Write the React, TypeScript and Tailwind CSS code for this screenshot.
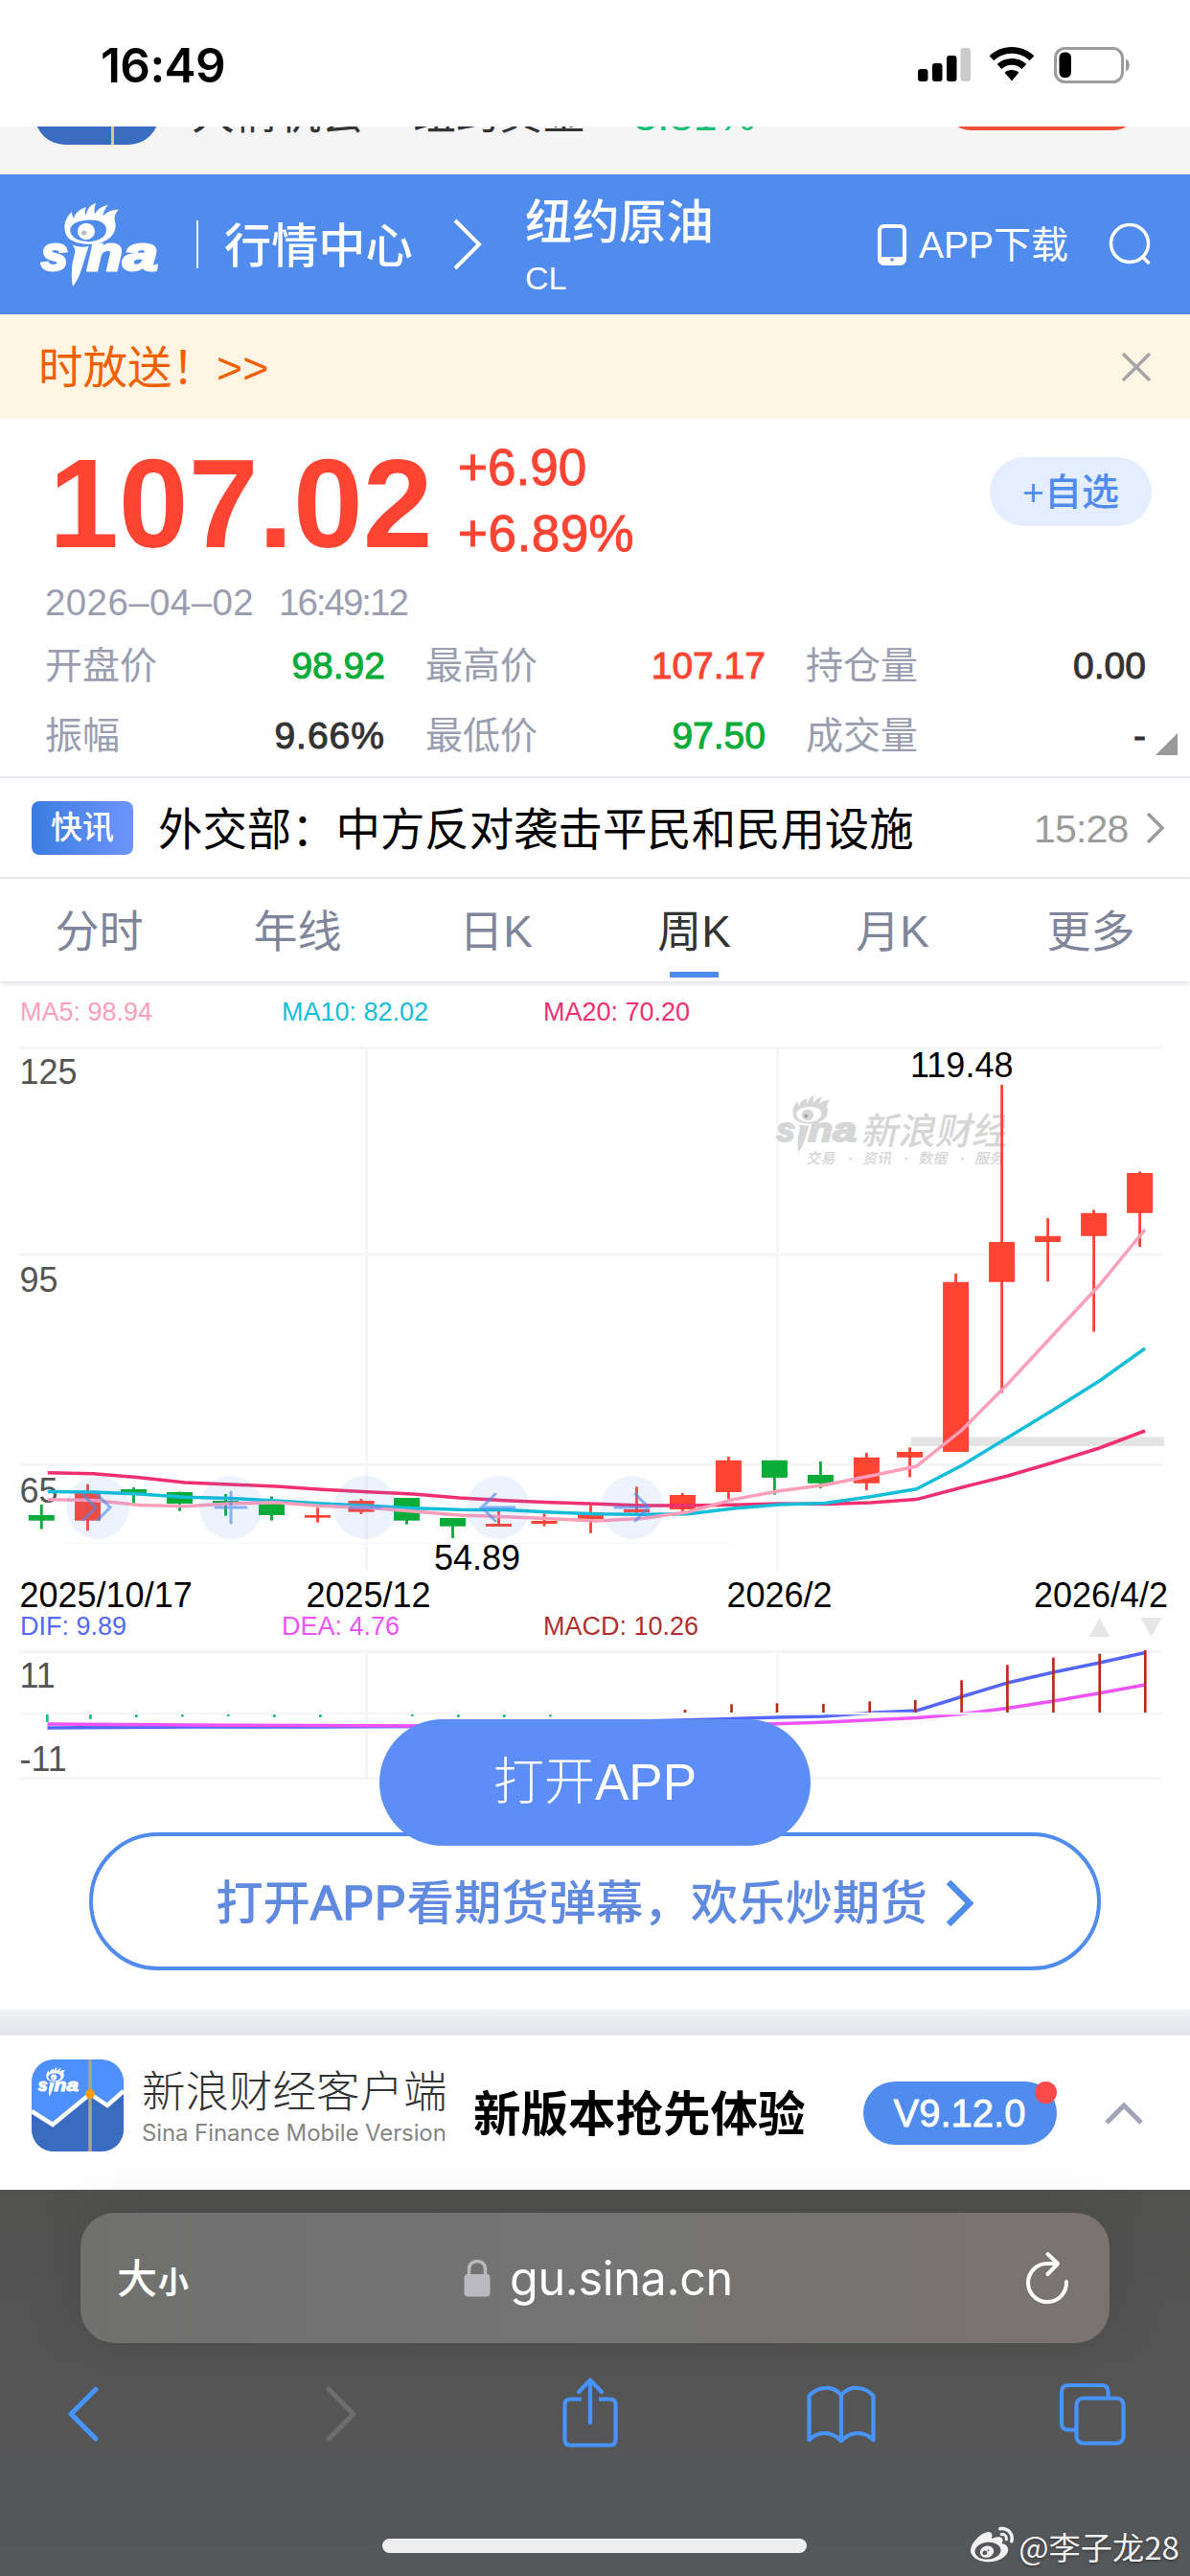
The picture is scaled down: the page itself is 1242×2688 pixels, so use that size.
import { FaWeibo } from "react-icons/fa";

type Candle = {
  x: number;
  top: number;
  bottom: number;
  high: number;
  low: number;
  up: boolean;
};

const RED = "#ff4433";
const GREEN = "#09ac39";

// [x, body top, body bottom, wick top, wick bottom, up]
const candles: Candle[] = (
  [
    [43.3, 1581, 1586.7, 1570, 1595.7, 0],
    [91.5, 1557.3, 1586.7, 1548.7, 1597.3, 1],
    [139.5, 1554, 1558, 1552, 1568.5, 0],
    [187.5, 1557, 1569, 1556.5, 1576.7, 0],
    [235.5, 1566, 1568.5, 1559, 1581.7, 0],
    [283.5, 1568, 1581, 1561.5, 1586.7, 0],
    [331.5, 1581, 1583.7, 1573.3, 1588.7, 1],
    [377, 1566, 1577.7, 1564, 1580, 1],
    [424.5, 1563, 1586.7, 1563, 1590.7, 0],
    [472.5, 1584, 1592.7, 1584, 1605, 0],
    [520.5, 1590, 1593, 1576.7, 1593, 1],
    [568, 1587, 1590, 1579.3, 1592.7, 1],
    [616.5, 1578, 1585, 1570.7, 1599.8, 1],
    [664.5, 1575, 1578, 1551.3, 1580, 1],
    [712.4, 1560, 1575, 1558, 1577.5, 1],
    [760.4, 1523.8, 1557, 1520, 1564, 1],
    [808.4, 1523.8, 1541.9, 1523.8, 1559.6, 0],
    [856.4, 1539, 1547.8, 1525, 1553, 0],
    [904.4, 1520.8, 1547.8, 1516, 1555, 1],
    [949.6, 1515, 1520.8, 1510.3, 1541.5, 1],
    [997.6, 1337.8, 1515, 1329, 1515, 1],
    [1045.6, 1296, 1337.8, 1132, 1453.5, 1],
    [1093.6, 1289.8, 1296, 1271.2, 1337.3, 1],
    [1141.6, 1265.8, 1289.8, 1262.4, 1389.6, 1],
    [1189.6, 1224, 1265.8, 1222.4, 1301, 1],
  ] as number[][]
).map(([x, top, bottom, high, low, up]) => ({
  x,
  top,
  bottom,
  high,
  low,
  up: up === 1,
}));

const ma5 = [
  1564.7, 1565.5, 1570.5, 1571.7, 1569, 1567.7, 1571.5, 1573.3, 1577, 1581,
  1582.7, 1584.7, 1587, 1584.5, 1577.7, 1564.6, 1555.8, 1549.5, 1540, 1530,
  1492, 1444, 1392.5, 1341, 1283,
];
const ma10 = [
  1556.5, 1557, 1559, 1562.3, 1563.5, 1566, 1569, 1571.3, 1573.7, 1575.3,
  1575.5, 1578, 1579.7, 1580.3, 1579.8, 1574, 1570, 1568.4, 1561.7, 1553.7,
  1529, 1500, 1471, 1441, 1407,
];
const ma20 = [
  1536.7, 1537.7, 1541.7, 1547, 1549, 1551, 1554.2, 1556.7, 1559, 1563,
  1565.7, 1567.7, 1569.3, 1571, 1571, 1570.3, 1569, 1569.6, 1568, 1564.6,
  1552, 1540, 1526, 1511, 1493,
];

function toPoints(values: number[]) {
  return values.map((y, i) => `${(49.8 + i * 47.72).toFixed(1)},${y}`).join(" ");
}

const macdBars: [number, number][] = [
  [715, 1784], [763.5, 1778.3], [811, 1777.3], [859.4, 1778], [907.7, 1775.3],
  [955.3, 1774], [1003.6, 1753.3], [1051.4, 1737.3], [1099.4, 1729.7],
  [1147.7, 1725.7], [1195.3, 1722],
];

const macdDots: [number, number][] = [
  [49.5, 8], [94.5, 5], [142.5, 3], [190.5, 2.5], [238.5, 2], [286.5, 3],
  [334.5, 3], [430.5, 2], [478.5, 3], [526.5, 3], [574.5, 2.5],
];

function SinaMark({ className }: { className?: string }) {
  return (
    <svg viewBox="38 30 370 266" className={className} fill="currentColor">
      <path
        fillRule="evenodd"
        d="M117 128C108 100 118 78 136 60C137 69 138 75 143 80C147 62 161 52 181 46C177 57 176 65 180 72C184 52 194 37 211 33C207 45 205 56 208 67C216 52 230 43 249 38C240 50 235 60 233 73C245 60 262 53 282 53C272 63 268 73 270 87C276 106 272 124 257 139C240 155 213 161 186 161C152 160 124 149 117 128ZM131 117C132 141 157 153 190 153C222 152 245 137 244 114C243 93 218 84 190 85C157 86 131 98 131 117Z"
      />
      <ellipse cx="181" cy="121" rx="27" ry="26" />
      <ellipse cx="174" cy="126" rx="9" ry="8" className="fill-black/25" />
      <g
        stroke="currentColor"
        strokeWidth="9"
        style={{ font: "italic bold 152px 'Liberation Sans'" }}
      >
        <text x="40" y="242" textLength="84" lengthAdjust="spacingAndGlyphs">s</text>
        <text x="184" y="242" textLength="110" lengthAdjust="spacingAndGlyphs">n</text>
        <text x="296" y="242" textLength="108" lengthAdjust="spacingAndGlyphs">a</text>
      </g>
      <path d="M138 163Q166 174 189 167L166 240Q156 272 139 293Q133 262 138 222L146 186Q148 175 138 163Z" />
    </svg>
  );
}

function StatusBar() {
  return (
    <div className="flex h-[132px] items-start justify-between bg-white pl-[105px] pr-[61px]">
      <span className="mt-[37px] font-['Inter'] text-[49.5px] font-semibold leading-[62px] tracking-[-0.6px] text-black">
        16:49
      </span>
      <div className="mt-[49px] flex items-start">
        <svg className="h-[37px] w-[56px]" viewBox="0 0 56 37">
          <rect x="1" y="23" width="10.5" height="13" rx="3" />
          <rect x="16" y="17" width="10.5" height="19" rx="3" />
          <rect x="31" y="9" width="10.5" height="27" rx="3" />
          <rect x="45.5" y="1" width="10.5" height="35" rx="3" fill="#cbcbcb" />
        </svg>
        <svg className="ml-[19px] h-[37px] w-[48px]" viewBox="0 0 48 37">
          <path d="M24 0C33.500 0 41.500 3.600 47.300 9.400L42.600 14.200C37.700 9.500 31.300 6.700 24 6.700S10.300 9.500 5.400 14.200L.7 9.400C6.500 3.600 14.500 0 24 0Z" />
          <path d="M24 12C30 12 35.300 14.300 39.300 18L34.500 22.900C31.700 20.300 28.100 18.700 24 18.700S16.300 20.300 13.500 22.900L8.700 18C12.700 14.300 18 12 24 12Z" />
          <path d="M24 24C27 24 29.600 25 31.400 26.700L24 35.500L16.600 26.700C18.400 25 21 24 24 24Z" />
        </svg>
        <svg className="ml-[19px] h-[38px] w-[82px]" viewBox="0 0 82 38">
          <rect x="2.500" y="1.500" width="70" height="35" rx="10" fill="none" stroke="#9c9c9c" strokeWidth="3" />
          <rect x="6.500" y="5.500" width="12.500" height="26.500" rx="5.500" />
          <path d="M76 12.500C81 14 81 24 76 25.500Z" fill="#9c9c9c" />
        </svg>
      </div>
    </div>
  );
}

function TopStrip() {
  return (
    <div className="flex h-[50px] items-end overflow-hidden bg-[#f5f5f5] pl-[36px] text-[45px] leading-[50px] text-[#333]">
      <div className="mb-[31px] flex h-[120px] w-[130px] shrink-0 rounded-[32px] bg-[#3a6cc0] pl-[80px]">
        <div className="h-full w-[3px] bg-[#dcc98a]" />
      </div>
      <span className="mb-[37px] ml-[34px] w-[231px] shrink-0">大情机会</span>
      <span className="mb-[37px] w-[230px] shrink-0">纽约黄金</span>
      <span className="mb-[36px] w-[328px] shrink-0 text-[45px] text-[#1bbf77]">3.81%</span>
      <div className="mb-[46px] h-[80px] w-[197px] shrink-0 rounded-[24px] bg-[#ef5138]" />
    </div>
  );
}

function Header() {
  return (
    <header className="flex h-[146px] items-center bg-[#4f8cee] pl-[42px] text-white">
      <SinaMark className="h-[89px] w-[124px]" />
      <div className="ml-[39px] h-[50px] w-[2px] bg-white/90" />
      <span className="ml-[27px] w-[200px] pt-[3px] text-[49.200px] font-medium leading-[60px]">行情中心</span>
      <svg className="ml-[38px] h-[54px] w-[32px]" viewBox="0 0 32 54" fill="none" stroke="white" strokeWidth="4">
        <path d="M3 2L28 27L3 52" />
      </svg>
      <div className="ml-[44px] flex w-[367px] flex-col pt-[2px]">
        <span className="text-[49.200px] font-medium leading-[58px]">纽约原油</span>
        <span className="mt-[10px] text-[34px] leading-[38px]">CL</span>
      </div>
      <svg className="h-[43px] w-[32px]" viewBox="0 0 32 43" fill="none" stroke="white">
        <rect x="3" y="2" width="26" height="39" rx="4.500" strokeWidth="4" />
        <path d="M3 37.500H29" strokeWidth="7" />
        <circle cx="16" cy="37" r="1.800" fill="#4f8cee" stroke="none" />
      </svg>
      <span className="ml-[12px] w-[160px] pt-[2px] text-[39px] leading-[50px]">APP下载</span>
      <svg className="ml-[38px] h-[46px] w-[46px]" viewBox="0 0 46 46" fill="none" stroke="white" strokeWidth="3.500">
        <circle cx="22" cy="22" r="19.500" />
        <path d="M35.500 36L42.500 43" />
      </svg>
    </header>
  );
}

function Notice() {
  return (
    <div className="flex h-[109px] items-center justify-between bg-[#fff5e2] pl-[40px] pr-[41px]">
      <p className="pt-[2px] text-[46.500px] leading-[60px] text-[#f06000]">时放送！&gt;&gt;</p>
      <svg className="h-[30px] w-[30px]" viewBox="0 0 30 30" stroke="#a5a5a5" strokeWidth="3.500">
        <path d="M1 1L29 29M29 1L1 29" />
      </svg>
    </div>
  );
}

type Stat = { label: string; value: string; color: string };

const stats: Stat[] = [
  { label: "开盘价", value: "98.92", color: "text-[#09ac39]" },
  { label: "最高价", value: "107.17", color: "text-[#ff4433]" },
  { label: "持仓量", value: "0.00", color: "text-[#333]" },
  { label: "振幅", value: "9.66%", color: "text-[#333] tracking-[1px]" },
  { label: "最低价", value: "97.50", color: "text-[#09ac39]" },
  { label: "成交量", value: "-", color: "text-[#333]" },
];

function Quote() {
  return (
    <section className="relative h-[373px] bg-white px-[47px]">
      <div className="flex pt-[16px] text-[#ff4433]">
        <span className="w-[431px] pl-[4px] pt-[8px] text-[131px] font-bold leading-[130px]">107.02</span>
        <div className="flex flex-col text-[53px] leading-[69px] [-webkit-text-stroke:1px_#ff4433]">
          <span>+6.90</span>
          <span className="tracking-[0.500px]">+6.89%</span>
        </div>
        <button className="ml-auto mr-[-7px] mt-[24px] flex h-[72px] w-[169px] items-center justify-center rounded-full bg-[#e4eefe] pt-[2px] text-[39px] font-medium leading-[50px] text-[#4f8cee]">
          +自选
        </button>
      </div>
      <p className="mt-[15px] flex text-[38.500px] leading-[46px] text-[#9a9eb0]">
        <span className="w-[244px] tracking-[0.400px]">2026–04–02</span>
        <span className="tracking-[-2px]">16:49:12</span>
      </p>
      <dl className="mt-[6px] grid grid-cols-[355px_355px_355px] gap-x-[42px] text-[39px] leading-[73px]">
        {stats.map((s) => (
          <div key={s.label} className="flex justify-between">
            <dt className="text-[#9a9eb0]">{s.label}</dt>
            <dd className={`${s.color} [-webkit-text-stroke:1px_currentColor]`}>{s.value}</dd>
          </div>
        ))}
      </dl>
      <svg className="absolute bottom-[22px] right-[13px] h-[23px] w-[23px]" viewBox="0 0 23 23">
        <path d="M23 0V23H0Z" fill="#999" />
      </svg>
    </section>
  );
}

function NewsRow() {
  return (
    <div className="flex h-[107px] items-center border-y-2 border-[#e9e9f3] bg-white pl-[33px]">
      <span className="flex h-[56px] w-[106px] items-center justify-center rounded-[8px] bg-linear-to-r from-[#3a7ce0] to-[#6d95fa] text-[33px] font-medium leading-none text-white">
        快讯
      </span>
      <span className="ml-[26px] w-[914px] pt-[5px] text-[46.400px] leading-[60px] text-black">
        外交部：中方反对袭击平民和民用设施
      </span>
      <span className="pt-[3px] text-[41px] leading-[50px] tracking-[-0.800px] text-[#9c9c9c]">15:28</span>
      <svg className="ml-[18px] h-[34px] w-[20px]" viewBox="0 0 20 34" fill="none" stroke="#9c9c9c" strokeWidth="3.500">
        <path d="M2 2L17 17L2 32" />
      </svg>
    </div>
  );
}

const tabs = ["分时", "年线", "日K", "周K", "月K", "更多"];

function Tabs() {
  return (
    <nav className="grid h-[107px] grid-cols-6 bg-white shadow-[0_3px_4px_#e4e4ef]">
      {tabs.map((t) => (
        <div key={t} className="flex flex-col items-center justify-between">
          <span
            className={`pt-[25px] text-[46px] leading-[60px] ${t === "周K" ? "text-[#333]" : "text-[#80869a]"}`}
          >
            {t}
          </span>
          {t === "周K" && <span className="mb-[4px] h-[6px] w-[51px] bg-[#4f8cee]" />}
        </div>
      ))}
    </nav>
  );
}

function Watermark() {
  return (
    <svg x="809" y="1140" width="240" height="80" viewBox="0 0 240 80" className="text-[#d6d6d6]" fill="currentColor">
      <svg x="1" y="2" width="85" height="62">
        <SinaMark />
      </svg>
      <g className="font-['Noto_Sans_CJK_SC'] font-medium">
        <text x="91" y="54" fontSize="38.500" transform="translate(10 0) skewX(-12)">新浪财经</text>
        <g fontSize="15" transform="translate(15 0) skewX(-12)">
          <text x="33" y="74">交易</text>
          <circle cx="78.500" cy="69" r="1.500" />
          <text x="92" y="74">资讯</text>
          <circle cx="136.500" cy="69" r="1.500" />
          <text x="150" y="74">数据</text>
          <circle cx="195" cy="69" r="1.500" />
          <text x="209" y="74">服务</text>
        </g>
      </g>
    </svg>
  );
}

function KLineChart() {
  return (
    <svg className="block h-[603px] w-full text-[36px]" viewBox="0 1080 1242 603">
      <g stroke="#f5f6f8" strokeWidth="3">
        <path d="M20 1093.500H1213M20 1309H1213M20 1528.500H1213" />
        <path d="M382.500 1094V1639M811.500 1094V1639" />
      </g>
      <path d="M66 1610.500H762" stroke="#f7f7f7" />
      <Watermark />
      <rect x="951" y="1499.500" width="264" height="9.500" fill="#e4e4e4" />
      <g fill="#555">
        <text x="20.500" y="1131">125</text>
        <text x="20.500" y="1348">95</text>
        <text x="20.500" y="1567.500">65</text>
      </g>
      {candles.map((c) => (
        <g key={c.x} fill={c.up ? RED : GREEN}>
          <rect x={c.x - 13.5} y={c.top} width="27" height={c.bottom - c.top} />
          <rect x={c.x - 1.4} y={c.high} width="2.800" height={c.low - c.high} />
        </g>
      ))}
      <g fill="none" strokeWidth="3.500">
        <polyline points={toPoints(ma20)} stroke="#f0306f" />
        <polyline points={toPoints(ma10)} stroke="#14bdda" />
        <polyline points={toPoints(ma5)} stroke="#fd9fb9" />
      </g>
      <g fill="#000">
        <text x="950" y="1124">119.48</text>
        <text x="453" y="1638">54.89</text>
        <text x="20.500" y="1677">2025/10/17</text>
        <text x="319.500" y="1677">2025/12</text>
        <text x="758.500" y="1677">2026/2</text>
        <text x="1079" y="1677">2026/4/2</text>
      </g>
    </svg>
  );
}

function MacdChart() {
  return (
    <svg className="block h-[158px] w-full text-[36px]" viewBox="0 1712 1242 158">
      <g stroke="#f5f6f8" strokeWidth="3">
        <path d="M20 1723.500H1213M20 1855.500H1213" />
        <path d="M382.500 1725V1854M811.500 1725V1854" />
      </g>
      <g fill="#555">
        <text x="20.500" y="1761">11</text>
        <text x="20.500" y="1848">-11</text>
      </g>
      <g fill="none" strokeWidth="3.500">
        <polyline
          points="49.500,1803 200,1802 320,1802 450,1801.500 748,1794 811,1792 859,1791 913,1787 957,1785 1003.600,1770.500 1051.400,1756 1099.400,1745 1147.700,1735 1195.300,1724.500"
          stroke="#5566ff"
        />
        <polyline
          points="49.500,1799 240,1800.300 450,1801 700,1801 811,1798.700 863,1797 957,1792.500 1003.600,1788.500 1051.400,1782.500 1099.400,1775 1147.700,1766.700 1195.300,1758"
          stroke="#ee53fa"
        />
      </g>
      <path d="M21 1788H1214" stroke="#f5f6f8" strokeWidth="2.500" />
      {macdDots.map(([x, h]) => (
        <rect key={x} x={x - 1.5} y="1789" width="2.700" height={h} fill="#26c28e" />
      ))}
      {macdBars.map(([x, y]) => (
        <rect key={x} x={x - 1.3} y={y} width="2.600" height={1787 - y} fill="#b52a14" />
      ))}
    </svg>
  );
}

function ChartControls() {
  const glyphs = [
    "M18 20L31 33L18 46M33 20L46 33L33 46",
    "M33 17V49M17 33H49",
    "M17 33H49",
    "M15 33H50M30 19L16 33L30 47",
    "M15 33H50M36 19L50 33L36 47",
  ];
  return (
    <div className="absolute left-[69px] top-[1540px] flex gap-[73.400px]">
      {glyphs.map((d) => (
        <div key={d} className="h-[66px] w-[66px] rounded-full bg-[#4f8cee]/10">
          <svg viewBox="0 0 66 66" fill="none" stroke="#4f8cee" strokeOpacity="0.650" strokeWidth="3" strokeLinecap="round">
            <path d={d} />
          </svg>
        </div>
      ))}
    </div>
  );
}

function AppBanner() {
  return (
    <div className="flex h-[161px] items-center bg-white pb-[15px] pl-[33px]">
      <svg className="h-[96px] w-[96px] rounded-[23px]" viewBox="0 0 96 96">
        <rect width="96" height="96" fill="#4d90fe" />
        <path d="M0 54L22 68L61 36L79 48L96 33V96H0Z" fill="#396bc0" />
        <path d="M0 54L22 68L61 36L79 48L96 33" fill="none" stroke="#fff" strokeWidth="4.500" />
        <path d="M61 0V96" stroke="#a9a68c" strokeWidth="3.500" />
        <circle cx="61" cy="36" r="4.800" fill="#ff9b05" />
        <svg x="6" y="8" width="44" height="31" className="text-white">
          <SinaMark />
        </svg>
      </svg>
      <div className="ml-[19px] flex w-[319px] flex-col pt-[6px]">
        <span className="whitespace-nowrap text-[45.500px] font-light leading-[52px] text-[#333]">
          新浪财经客户端
        </span>
        <span className="whitespace-nowrap font-['Inter'] text-[24px] leading-[32px] tracking-[-0.100px] text-[#858585]">
          Sina Finance Mobile Version
        </span>
      </div>
      <span className="ml-[27px] mt-[19px] whitespace-nowrap text-[49.500px] font-bold leading-[60px] text-black">
        新版本抢先体验
      </span>
      <div className="relative ml-[60px] mt-[15px] flex h-[66px] w-[202px] items-center justify-center rounded-full bg-[#4f8cee] text-[40px] leading-none text-white [-webkit-text-stroke:0.800px_white]">
        V9.12.0
        <span className="absolute right-0 top-0 h-[23px] w-[23px] rounded-full bg-[#ff4a4a]" />
      </div>
      <svg className="ml-[50px] mt-[15px] h-[24px] w-[40px]" viewBox="0 0 40 24" fill="none" stroke="#a3a3b8" strokeWidth="5">
        <path d="M2 22L20 4L38 22" />
      </svg>
    </div>
  );
}

function BrowserBar() {
  return (
    <footer className="relative h-[403px] bg-linear-to-b from-[#515250] via-[#555555] to-[#55575a] px-[84px] pt-[24px]">
      <div className="flex h-[136px] items-center rounded-[36px] bg-linear-to-r from-[#70716f] via-[#737473] to-[#7b7371] pl-[38px] pr-[42px] text-white shadow-[0_0_60px_rgba(0,0,0,0.140)]">
        <span className="w-[43px] pt-[3px] text-[42px] font-medium leading-[60px]">大</span>
        <span className="w-[32px] pt-[10px] text-[32px] font-bold leading-[60px]">小</span>
        <svg className="ml-[287px] h-[40px] w-[28px]" viewBox="0 0 28 40">
          <rect x="0.500" y="16" width="27" height="23.500" rx="4" fill="#bab9c1" />
          <path d="M5.500 18V11C5.500 -0.500 22.500 -0.500 22.500 11V18" fill="none" stroke="#bab9c1" strokeWidth="3.500" />
        </svg>
        <span className="ml-[20px] pt-[2px] font-['Inter'] text-[48.500px] leading-[60px] tracking-[-0.300px]">gu.sina.cn</span>
        <svg className="ml-auto h-[56px] w-[46px]" viewBox="0 0 46 56" fill="none" stroke="white" strokeWidth="4" strokeLinecap="round" strokeLinejoin="round">
          <path d="M43 32A20 20 0 1 1 23 13H33" />
          <path d="M23.500 3L34 13L23.500 24" />
        </svg>
      </div>
      <div className="mt-[35px] flex h-[78px] items-center text-[#4794ff]">
        <svg className="ml-[-15px] h-[60px] w-[36px] shrink-0" viewBox="0 0 35 58" fill="none" stroke="currentColor" strokeWidth="5" strokeLinecap="round" strokeLinejoin="round">
          <path d="M30 4L5 29L30 54" />
        </svg>
        <svg className="ml-[233px] h-[60px] w-[36px] shrink-0" viewBox="0 0 35 58" fill="none" stroke="#6e6e6e" strokeWidth="5" strokeLinecap="round" strokeLinejoin="round">
          <path d="M5 4L30 29L5 54" />
        </svg>
        <svg className="mb-[4px] ml-[212px] h-[76px] w-[60px] shrink-0" viewBox="0 0 60 76" fill="none" stroke="currentColor" strokeWidth="4.200" strokeLinecap="round" strokeLinejoin="round">
          <path d="M21 24.500H9Q3.500 24.500 3.500 30V67Q3.500 72.500 9 72.500H51Q56.500 72.500 56.500 67V30Q56.500 24.500 51 24.500H39" strokeLinecap="butt" />
          <path d="M30 49V5M18 17L30 4.500L42 17" />
        </svg>
        <svg className="ml-[195px] h-[62px] w-[74px] shrink-0" viewBox="0 0 74 62" fill="none" stroke="currentColor" strokeWidth="4.200" strokeLinejoin="round">
          <path d="M37 11Q28 2 19.500 4Q11 4 3.500 12V58Q11 51 19.500 51Q29 51 37 59Q45 51 54.500 51Q63 51 70.500 58V12Q63 4 54.500 4Q46 2 37 11V59" />
        </svg>
        <svg className="ml-[189px] h-[68px] w-[72px] shrink-0" viewBox="0 0 72 68" fill="none" stroke="currentColor" strokeWidth="4.200">
          <rect x="19.500" y="17.500" width="49" height="47" rx="7" />
          <path d="M19.500 50.500H11Q4 50.500 4 43.500V11Q4 4 11 4H45.500Q52.500 4 52.500 11V17" />
        </svg>
      </div>
      <div className="absolute bottom-[24px] left-[399px] h-[15px] w-[443px] rounded-full bg-[#eee]" />
      <div className="absolute bottom-[9px] right-[11px] flex items-center gap-[5px] leading-[44px] text-[#f2f2f2] [text-shadow:0_1px_3px_rgba(0,0,0,0.500)]">
        <FaWeibo className="h-[45px] w-[45px]" />
        <span className="font-['Noto_Sans_CJK_SC'] text-[33.200px]">@李子龙28</span>
      </div>
    </footer>
  );
}

export default function App() {
  return (
    <div className="relative h-[2688px] w-[1242px] overflow-hidden bg-white font-['Liberation_Sans','Noto_Sans_CJK_SC',sans-serif]">
      <StatusBar />
      <TopStrip />
      <Header />
      <Notice />
      <Quote />
      <NewsRow />
      <Tabs />
      <div className="flex h-[56px] items-center pl-[21px] pt-[7px] text-[27px] leading-[32px]">
        <span className="w-[273px] text-[#fd9fb9]">MA5: 98.94</span>
        <span className="w-[273px] text-[#14bdda]">MA10: 82.02</span>
        <span className="text-[#f0306f]">MA20: 70.20</span>
      </div>
      <KLineChart />
      <div className="flex h-[29px] items-center pl-[21px] text-[27px] leading-[29px]">
        <span className="w-[273px] text-[#5568ff]">DIF: 9.89</span>
        <span className="w-[273px] text-[#ee53fa]">DEA: 4.76</span>
        <span className="text-[#b03030]">MACD: 10.26</span>
        <svg className="ml-auto mr-[29px] h-[20px] w-[78px]" viewBox="0 0 78 20" fill="#e6e6e6">
          <path d="M12.500 0L23.500 20H1.500ZM55.500 0H77.500L66.500 20Z" />
        </svg>
      </div>
      <MacdChart />
      <div className="h-[227px] px-[93px] pt-[42px]">
        <button className="flex h-[144px] w-full items-center justify-center rounded-full border-4 border-[#4f8cee] pt-[3px] text-[49.400px] font-medium leading-[60px] text-[#5f8ae0]">
          <span>
            打开<span className="tracking-[0.600px] [-webkit-text-stroke:1.400px_#5f8ae0]">APP</span>看期货弹幕，欢乐炒期货
          </span>
          <svg className="ml-[19px] h-[50px] w-[30px]" viewBox="0 0 30 50" fill="none" stroke="#4f8cee" strokeWidth="6.500">
            <path d="M3 3L25 25L3 47" />
          </svg>
        </button>
      </div>
      <div className="h-[27px] bg-linear-to-b from-[#f2f3f7] to-[#e2e3e8]" />
      <AppBanner />
      <BrowserBar />
      <ChartControls />
      <button className="absolute left-[396px] top-[1794px] flex h-[132px] w-[450px] items-center justify-center rounded-full bg-[#5d8df6] text-[53px] font-light leading-[60px] text-white">
        打开APP
      </button>
    </div>
  );
}
